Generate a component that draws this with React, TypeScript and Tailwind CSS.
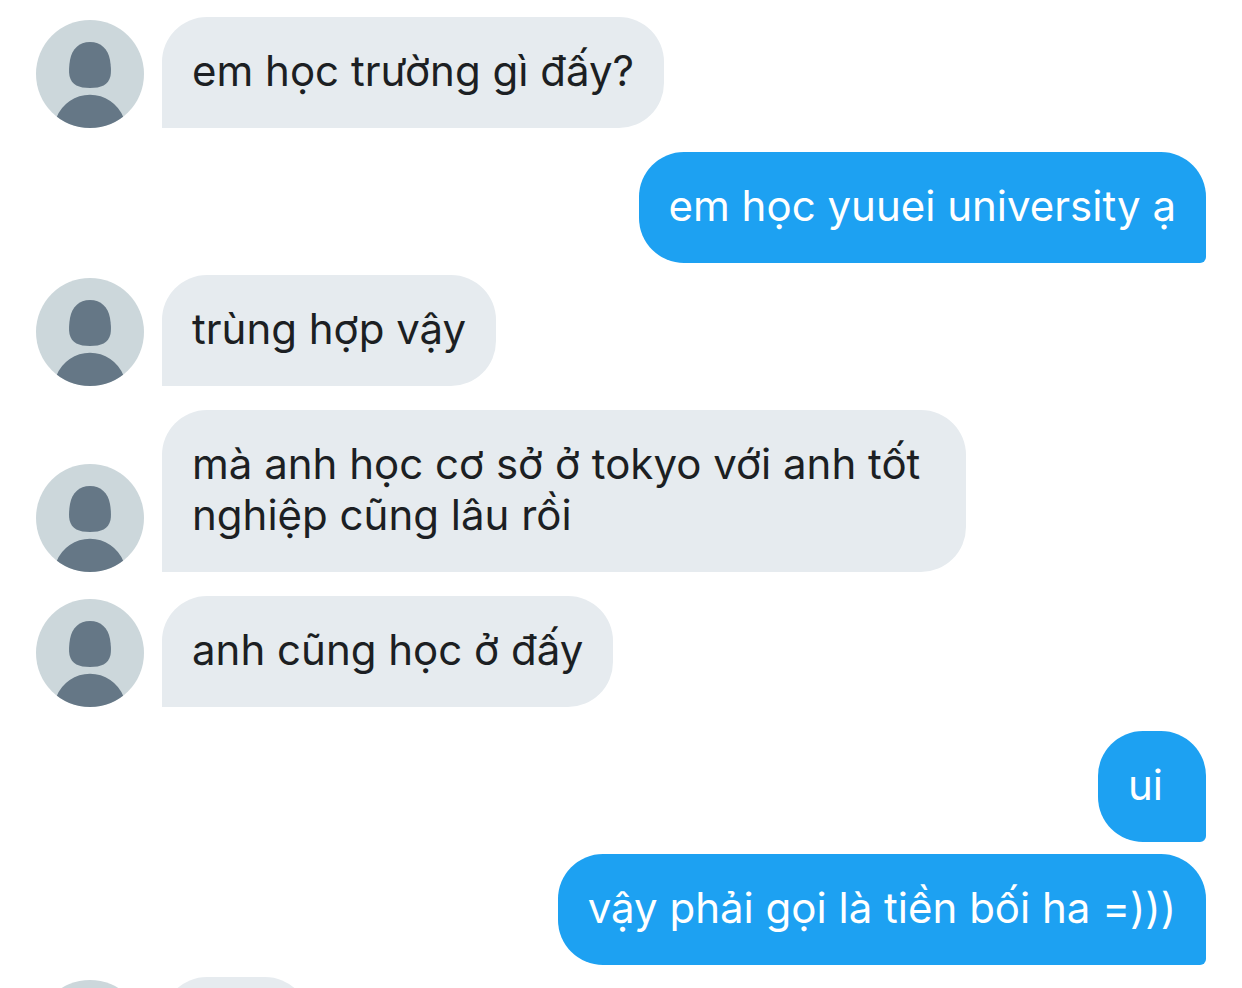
import React from "react";

type Message = { id: number; text?: string; mine?: boolean; spacing: string };

const messages: Message[] = [
  { id: 1, text: "em học trường gì đấy?", spacing: "mt-0" },
  { id: 2, text: "em học yuuei university ạ", mine: true, spacing: "mt-6" },
  { id: 3, text: "trùng hợp vậy", spacing: "mt-3" },
  { id: 4, text: "mà anh học cơ sở ở tokyo với anh tốt nghiệp cũng lâu rồi", spacing: "mt-6" },
  { id: 5, text: "anh cũng học ở đấy", spacing: "mt-6" },
  { id: 6, text: "ui", mine: true, spacing: "mt-6" },
  { id: 7, text: "vậy phải gọi là tiền bối ha =)))", mine: true, spacing: "mt-3" },
  { id: 8, spacing: "mt-3" },
];

function Avatar() {
  return (
    <svg viewBox="0 0 108 108" className="size-[108px] shrink-0 rounded-full bg-[#ccd7db]" role="img" aria-label="Avatar">
      <path d="M54 22C65 22 72 29 74 40C75 46 75.300 52 74.500 56C72.500 65 65 68 54 68S35.500 65 33.500 56C32.700 52 33 46 34 40C36 29 43 22 54 22Z" fill="#657786" />
      <path d="M20.500 97.500A36 36 0 0 1 87.500 97.500V108H20.500Z" fill="#657786" />
    </svg>
  );
}

function MessageRow({ text, mine, spacing }: Message) {
  return (
    <li className={`flex items-end gap-[18px] ${spacing} ${mine ? "justify-end" : ""}`}>
      {!mine && <Avatar />}
      <p
        className={`max-w-[804px] rounded-[45px] pt-7 pb-8 pl-[30px] text-[42px] leading-[51px] font-normal ${
          mine ? "rounded-br-[6px] bg-[#1da1f2] text-white" : "rounded-bl-none bg-[#e6ebef] text-[#1c1f23]"
        } ${text ? "min-w-[108px] pr-[30px]" : "min-h-[111px] w-[148px]"}`}
      >
        {text}
      </p>
    </li>
  );
}

export default function App() {
  return (
    <main className="h-screen overflow-hidden bg-white px-9 pt-[17px] font-['Inter',sans-serif]">
      <ul>
        {messages.map((message) => (
          <MessageRow key={message.id} {...message} />
        ))}
      </ul>
    </main>
  );
}
